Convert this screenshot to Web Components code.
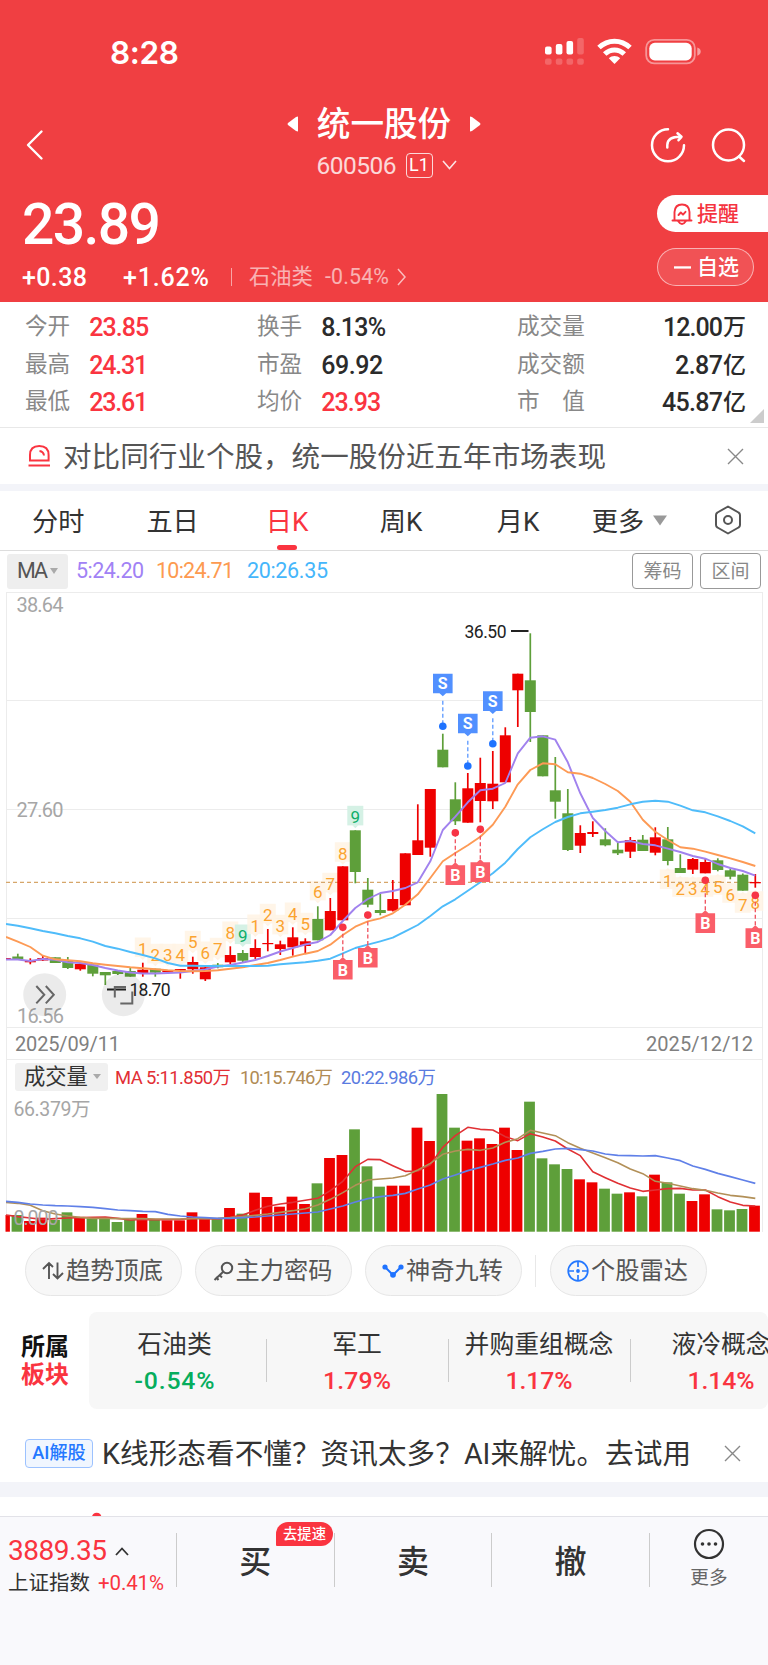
<!DOCTYPE html>
<html lang="zh-CN">
<head>
<meta charset="utf-8">
<title>统一股份 600506</title>
<style>
    body {
        margin: 0;
        width: 768px;
        background: #fff;
        font-family: Roboto, "Noto Sans CJK SC", sans-serif;
        line-height: 1;
        color: #333;
    }
</style>
</head>
<body>
<stock-app></stock-app>

<script>
// Text that is spaced out to fill exactly `w` pixels
class FitText extends HTMLElement {

    constructor() {
        super();
        this.attachShadow({ mode: "open" });
        this.shadowRoot.innerHTML = `
            <style>
                :host { display: inline-block; white-space: pre; flex: none; }
            </style>
            <slot></slot>
        `.replace(/\n\s*/g, "");
    }

    connectedCallback() {
        const width = Number(this.getAttribute("w"));
        const natural = this.getBoundingClientRect().width;
        const gaps = this.textContent.length - 1;

        if (gaps > 0) {
            this.style.letterSpacing = `${(width - natural) / gaps}px`;
        }
        this.style.width = `${width}px`;
    }
}

class StatusBar extends HTMLElement {

    constructor() {
        super();
        this.attachShadow({ mode: "open" });
        this.shadowRoot.innerHTML = `
            <style>
                :host {
                    display: flex;
                    justify-content: space-between;
                    align-items: center;
                    height: 105px;
                    padding: 0 67px 0 110px;
                    box-sizing: border-box;
                }
                .time { font: 600 31.5px/1 Inter, sans-serif; }
                svg { display: block; margin-top: -2px; }
            </style>
            <fit-text class="time" w="69">8:28</fit-text>
            <svg width="158" height="30" viewBox="543 37 158 30" fill="#fff">
                <rect x="545" y="46.5" width="6.6" height="8" rx="2"/>
                <rect x="555.8" y="44" width="6.6" height="10.5" rx="2"/>
                <rect x="566.5" y="41" width="6.6" height="13.5" rx="2"/>
                <g opacity=".2">
                    <rect x="577.2" y="38" width="6.6" height="16.5" rx="2"/>
                    <rect x="545" y="58.5" width="6.6" height="6.3" rx="2"/>
                    <rect x="555.8" y="58.5" width="6.6" height="6.3" rx="2"/>
                    <rect x="566.5" y="58.5" width="6.6" height="6.3" rx="2"/>
                    <rect x="577.2" y="58.5" width="6.6" height="6.3" rx="2"/>
                </g>
                <g fill="none" stroke="#fff" stroke-width="5">
                    <path d="M599 47.5 C608 39 621 39 630 47.5"/>
                    <path d="M604.7 54 C610.5 48.5 618.5 48.5 624.3 54"/>
                </g>
                <path d="M614.5 64 L608.8 58.2 C612 55.2 617 55.2 620.2 58.2 Z"/>
                <rect x="646.2" y="39.8" width="48.6" height="23.6" rx="8" fill="none" stroke="#fff" stroke-opacity=".45" stroke-width="1.8"/>
                <rect x="649.3" y="42.8" width="42.4" height="17.6" rx="5.5"/>
                <path d="M697.3 47.5 Q700.7 48.5 700.7 51.6 Q700.7 54.7 697.3 55.7 Z" opacity=".5"/>
            </svg>
        `;
    }
}

class StockHeader extends HTMLElement {

    constructor() {
        super();
        this.attachShadow({ mode: "open" });
        this.shadowRoot.innerHTML = `
            <style>
                :host {
                    display: block;
                    height: 302px;
                    background: #f03f42;
                    color: #fff;
                }
                svg { display: block; flex: none; }
                nav {
                    display: grid;
                    grid-template-columns: 200px 1fr 200px;
                    height: 78px;
                }
                .back { padding: 24px 0 0 26px; }
                .name, .code {
                    display: flex;
                    justify-content: center;
                    align-items: center;
                }
                .name { height: 37px; gap: 18px; font-size: 33.6px; font-weight: 500; }
                .name span { padding-top: 2px; }
                .code { height: 46px; gap: 9px; font-size: 24.5px; padding: 0 0 0 5px; }
                .code fit-text { opacity: .8; padding-top: 2px; }
                .level {
                    border: 1px solid #ffffffcc;
                    border-radius: 4px;
                    width: 25px;
                    height: 23px;
                    display: grid;
                    place-items: center;
                    font-size: 18px;
                }
                .tools { display: flex; justify-content: flex-end; gap: 25px; padding: 22px 21px 0 0; }
                .quote { display: flex; justify-content: space-between; }
                .price { display: flex; font-size: 57px; font-weight: 500; margin: 13px 0 0 22px; }
                .change {
                    display: flex;
                    align-items: center;
                    height: 26px;
                    margin: 11px 0 0 22px;
                    font-size: 25px;
                    font-weight: 500;
                }
                .change i { width: 1px; height: 18px; background: #fff8; margin: 0 17px 0 22px; }
                .change .dim { opacity: .6; font-weight: 400; font-size: 21.3px; margin-right: 12px; }
                .side { display: flex; flex-direction: column; align-items: flex-end; padding-top: 12px; gap: 16px; }
                .alert, .watch {
                    display: flex;
                    align-items: center;
                    box-sizing: border-box;
                    height: 37px;
                    font-size: 21px;
                    font-weight: 500;
                }
                .alert {
                    width: 111px;
                    padding-left: 14px;
                    gap: 4px;
                    border-radius: 19px 0 0 19px;
                    background: #fff;
                    color: #f5333f;
                }
                .alert span { padding-top: 1px; }
                .watch {
                    width: 97px;
                    height: 38px;
                    padding-left: 16px;
                    gap: 6px;
                    margin-right: 14px;
                    border: 1px solid #ffffff90;
                    border-radius: 19px;
                    background: #ffffff1a;
                }
            </style>
            <status-bar></status-bar>
            <nav>
                <div class="back">
                    <svg width="18" height="32" fill="none" stroke="#fff" stroke-width="2.4" stroke-linecap="round" stroke-linejoin="round">
                        <path d="M15.5 2.5 L2 16 L15.5 29.5"/>
                    </svg>
                </div>
                <div>
                    <div class="name">
                        <svg width="12" height="16"><path d="M11 .5 V15.5 L9 15 L1 9 Q0 8 1 7 L9 1 Z" fill="#fff"/></svg>
                        <span>统一股份</span>
                        <svg width="12" height="16"><path d="M1 .5 V15.5 L3 15 L11 9 Q12 8 11 7 L3 1 Z" fill="#fff"/></svg>
                    </div>
                    <div class="code">
                        <fit-text w="80">600506</fit-text>
                        <span class="level">L1</span>
                        <svg width="15" height="10" fill="none" stroke="#fff" stroke-width="1.6" opacity=".85"><path d="M1 1 L7.5 8.5 L14 1"/></svg>
                    </div>
                </div>
                <div class="tools">
                    <svg width="36" height="38" viewBox="650 127 36 38" fill="none" stroke="#fff" stroke-width="2.5" stroke-linecap="round" stroke-linejoin="round">
                        <path d="M668 129.3 A16 16 0 1 0 684 145.3"/>
                        <path d="M667.3 147.5 V145 Q667.5 136.8 680 136.8"/>
                        <path d="M677.5 133.3 L681.5 136.8 L678.5 140.2"/>
                    </svg>
                    <svg width="36" height="38" viewBox="711 127 36 38" fill="none" stroke="#fff" stroke-width="2.5" stroke-linecap="round">
                        <circle cx="728.5" cy="145" r="15.5"/><path d="M739 156.5 L744 161"/>
                    </svg>
                </div>
            </nav>
            <div class="quote">
                <div>
                    <div class="price"><fit-text w="139">23.89</fit-text></div>
                    <div class="change">
                        <fit-text w="65">+0.38</fit-text>
                        <fit-text w="86" style="margin-left:36px">+1.62%</fit-text>
                        <i></i>
                        <span class="dim">石油类</span>
                        <fit-text class="dim" w="64" style="margin-right:8px">-0.54%</fit-text>
                        <svg width="10" height="18" fill="none" stroke="#fff" stroke-width="1.5" opacity=".65"><path d="M1 1 L8 9 L1 17"/></svg>
                    </div>
                </div>
                <div class="side">
                    <div class="alert">
                        <svg width="22" height="24" fill="none" stroke="#f5333f" stroke-width="1.9" stroke-linejoin="round" stroke-linecap="round">
                            <path d="M3.5 18 V10 Q4 2.5 11 2.5 Q18 2.5 18.5 10 V18 M1.5 18.5 H20.5 M7 19 Q11 25 15 19"/>
                            <path d="M7.5 13 L9.8 10.5 L12 12.7 L14.5 9.8"/>
                        </svg>
                        <span>提醒</span>
                    </div>
                    <div class="watch">
                        <svg width="17" height="3"><rect y=".3" width="17" height="2.3" fill="#fff"/></svg>
                        <span>自选</span>
                    </div>
                </div>
            </div>
        `;
    }
}

class StockStats extends HTMLElement {

    constructor() {
        super();
        this.attachShadow({ mode: "open" });

        const cells = [
            ["今开", "23.85", 60, "up"], ["换手", "8.13%", 65, ""], ["成交量", "12.00", 60, "", "万"],
            ["最高", "24.31", 59, "up"], ["市盈", "69.92", 62, ""], ["成交额", "2.87", 48, "", "亿"],
            ["最低", "23.61", 59, "up"], ["均价", "23.93", 60, "up"], ["市　值", "45.87", 61, "", "亿"]
        ];

        this.shadowRoot.innerHTML = `
            <style>
                :host {
                    display: grid;
                    grid-template-columns: 232px 260px 229px;
                    grid-auto-rows: 37.5px;
                    align-items: center;
                    height: 126px;
                    padding: 7px 22px 0 25px;
                    box-sizing: border-box;
                    border-bottom: 1px solid #e8e8e8;
                    position: relative;
                }
                div { display: flex; align-items: center; font-size: 22.6px; color: #888; }
                b { display: flex; align-items: center; margin-left: 19px; font-weight: 500; font-size: 25px; color: #2b2b2b; }
                b span { font-size: 23px; }
                .up { color: #fa3440; }
                div:nth-of-type(3n) b { margin-left: auto; }
                svg { position: absolute; right: 4px; bottom: 4px; }
            </style>
            ${cells.map(([label, value, width, cls, unit]) => `
                <div>${label}<b class="${cls}"><fit-text w="${width}">${value}</fit-text>${unit ? `<span>${unit}</span>` : ""}</b></div>
            `).join("")}
            <svg width="14" height="14"><path d="M14 0 V14 H0 Z" fill="#ccc"/></svg>
        `;
    }
}

class NoticeRow extends HTMLElement {

    constructor() {
        super();
        this.attachShadow({ mode: "open" });
        this.shadowRoot.innerHTML = `
            <style>
                :host {
                    display: flex;
                    align-items: center;
                    box-sizing: border-box;
                    height: 56px;
                    padding: 0 24px 0 27px;
                    font-size: 28.6px;
                    color: #555;
                }
                .text { padding-top: 3px; }
                .close { margin-left: auto; }
            </style>
            <slot name="icon"></slot>
            <div class="text"><slot></slot></div>
            <svg class="close" width="17" height="17" fill="none" stroke="#888" stroke-width="1.4"><path d="M1 1 L16 16 M16 1 L1 16"/></svg>
        `;
    }
}

class PeriodTabs extends HTMLElement {

    constructor() {
        super();
        this.attachShadow({ mode: "open" });
        this.shadowRoot.innerHTML = `
            <style>
                :host {
                    display: flex;
                    align-items: center;
                    box-sizing: border-box;
                    height: 60px;
                    padding-left: 32px;
                    border-bottom: 1px solid #ddd;
                    font-size: 26.2px;
                    white-space: nowrap;
                }
                span { flex: none; box-sizing: border-box; height: 59px; line-height: 62px; }
                .active { color: #fa3440; position: relative; }
                .active i {
                    position: absolute;
                    left: 11px;
                    bottom: 0;
                    width: 20px;
                    height: 5px;
                    border-radius: 2.5px;
                    background: #fa3440;
                }
                svg { flex: none; }
            </style>
            <span style="margin-right:62px">分时</span>
            <span style="margin-right:67px">五日</span>
            <span class="active" style="width:42px;margin-right:72px">日K<i></i></span>
            <span style="width:44px;margin-right:73px">周K</span>
            <span style="width:44px;margin-right:51px">月K</span>
            <span style="margin-right:9px">更多</span>
            <svg width="14" height="11"><path d="M0 .5 H14 L7 10.5 Z" fill="#999"/></svg>
            <svg style="margin-left:47px;margin-top:-1px" width="28" height="30" fill="none" stroke="#555" stroke-width="2" stroke-linejoin="round">
                <path d="M14 1.5 L24.5 7.5 Q26 8.3 26 10 V20 Q26 21.7 24.5 22.5 L14 28.5 L3.5 22.5 Q2 21.7 2 20 V10 Q2 8.3 3.5 7.5 Z"/>
                <circle cx="14" cy="15" r="4"/>
            </svg>
        `;
    }
}

const RED = "#ee0000";
const GREEN = "#5e9f3a";
const xAt = i => 5.3 + i * 12.5;
const line = (ys, color, width = 1.9) =>
    `<polyline points="${ys.map((y, i) => `${Math.max(6, xAt(i))},${y}`).join(" ")}" fill="none" stroke="${color}" stroke-width="${width}" stroke-linejoin="round"/>`;

// [up/down, high, body top, body bottom, low] in chart units
const CANDLES = [
    ["r",958,958,960,960],["g",953.7,956.5,959,960],["r",958.3,960.7,962.3,964.3],["r",955.5,958,960.5,961],
    ["g",957.3,957.3,963,963],["g",957,960.5,968,969],["r",962.5,964,969.3,970.7],["g",964.7,964.7,973.7,976.3],
    ["g",972,972,975.3,985],["g",970,971,974,975],["g",967.7,971,976.7,976.7],["r",962.7,969.7,973,976.7],
    ["g",968.7,968.7,972.7,976.7],["r",970.3,970.3,972,972],["r",969,969,970.7,978.7],["r",956.7,962,969.3,973.7],
    ["r",966.7,967.3,979.3,981],["g",963,964.7,967.3,968.3],["r",946.3,955,962.3,964.3],["g",950,953,960.7,962.3],
    ["r",939.3,948,957,959],["r",929,943,944.2,951.3],["r",940.7,944.3,949,955],["r",927.3,937.3,947.3,955.7],
    ["r",938.3,941.3,946,953],["g",906.3,919,940.3,940.3],["r",898,911,930.3,930.3],["r",866.3,866.3,920.3,920.3],
    ["g",830.3,830.3,872,883.3],["g",878,889.7,904.7,907.3],["g",894,910,913,915.3],["r",880,899,910.7,911.5],
    ["r",853.3,853.3,905.3,905.3],["r",804.3,840.3,855,855],["r",789,789,847.7,856.7],["g",733.7,749.7,767.3,767.3],
    ["g",782.3,799.3,821.3,825],["r",773,788.3,822.7,822.7],["r",757.7,783,801,822.3],["r",751,783.7,801.3,809],
    ["r",727.3,735.3,782.3,782.3],["r",673.7,673.7,690.3,727],["g",633.3,680.3,712,742],["g",735.3,735.3,776.3,776.3],
    ["g",757,790.3,801.7,818.7],["g",789,813.3,850,851],["r",825.3,833,845.7,853],["r",821.3,832,834,837],
    ["g",828.3,839.3,845.3,846.3],["g",842.3,849.7,853.3,855],["r",837,840,851.7,858],["g",835,839.7,851,851],
    ["r",827.3,837.3,852.7,855.3],["g",827,839.3,861,865.3],["g",854.3,868,873,873],["r",858,859,869.7,874],
    ["r",858.7,862,873.3,873.3],["g",858.3,860.3,870,871.3],["g",868.7,870.3,876.7,879.3],["g",873.5,874.7,890.7,890.7],
    ["r",874,882,883.3,887.7]
];

const MA5 = [959.5,959.5,961,959,959.7,962.3,963,965,968,970.5,972.5,973.5,973.5,973,972.5,971,969.5,966.5,965,962.5,
    960,956,951.5,948,944.5,942,935,921,908,899,893,891,888,882.3,861.3,830,816.7,802.3,790.3,788.7,
    783,753.3,737.7,736.3,739.7,762.3,793.3,818,831,842.3,841,844,845.3,848.7,852,856,858.7,864,868,871,875.7];
const MA10 = [937,941.7,947,955.7,959.3,960.3,961.3,963.3,964.7,966,967.3,968.3,969.3,970.3,971,971.3,971,970.3,968.7,967.3,
    965,963,960,956.7,953.7,951,944.7,935,926.7,921.3,918.3,913.3,904.7,894.3,878,861.3,853,845.3,836.7,824.7,
    806.7,784.3,770,763.3,764.3,772.3,773.7,778,784,791,801.7,819.7,831.7,840,847.3,848.7,851.7,855,858.3,862,866];
const MA20 = [924,925.7,928.3,931,933.3,936,938.3,941.7,946,948.7,952,955,958.3,963,965.7,965.7,966,966,966,966,
    966,965.7,964.3,963.3,962.3,960.7,958.7,953.3,948,944.7,941.3,937.7,931.3,925,916,906.3,899.3,890.7,882.3,873.3,
    862.7,849,837.3,829.3,822,817,813.3,811.7,810,807.7,804.3,801.7,800.7,801.7,805.7,810.3,812.3,816.3,821,826.3,833.3];

// [candle index, digit, baseline]
const COUNTS_UP = [[11,1,955],[12,2,961.3],[13,3,961.3],[14,4,961.3],[15,5,948.3],[16,6,959],[17,7,955.3],[18,8,939],[19,9,942],
    [20,1,932],[21,2,921.3],[22,3,932.3],[23,4,920],[24,5,930.3],[25,6,898.3],[26,7,890.3],[27,8,859.7],[28,9,823.3]];
const COUNTS_DOWN = [[53,1,887],[54,2,894.7],[55,3,895],[56,4,894.7],[57,5,892.7],[58,6,900.7],[59,7,910.7],[60,8,908.7]];

class KlineChart extends HTMLElement {

    constructor() {
        super();
        this.attachShadow({ mode: "open" });
        this.shadowRoot.innerHTML = `
            <style>
                :host { display: block; height: 468px; }
                svg { display: block; }
                text { font-family: Roboto, sans-serif; }
                .axis { font-size: 20px; fill: #a6a6a6; }
                .date { font-size: 20px; fill: #808080; }
                .mark { font-size: 17.5px; fill: #222; }
                .count { font-size: 17px; text-anchor: middle; }
                .flag { font-size: 16px; font-weight: 700; text-anchor: middle; fill: #fff; }
            </style>
            <svg width="768" height="468" viewBox="0 591 768 468">
                <path d="M6 592.5 H762 M6 700.5 H762 M6 809.5 H762 M6 918.5 H762 M6 1027.5 H762 M6.5 592 V1059 M762.5 592 V1059" stroke="#ececec" fill="none"/>
                <text class="axis" x="16.5" y="612" textLength="47">38.64</text>
                <text class="axis" x="16.5" y="817.3" textLength="47">27.60</text>
                ${this.counts()}
                <path d="M6 882.4 H762" stroke="#d6a66a" stroke-width="1.4" stroke-dasharray="4 3"/>
                <clipPath id="plot"><rect x="6" y="592" width="756" height="440"/></clipPath>
                <g clip-path="url(#plot)">
                    ${CANDLES.map((c, i) => this.candle(c, i)).join("")}
                    ${line(MA5, "#a182ee")}
                    ${line(MA10, "#fd9a55")}
                    ${line(MA20, "#4fbcfa")}
                    ${this.flags()}
                </g>
                <text class="mark" x="464.5" y="637.5" textLength="42">36.50</text>
                <path d="M511 631 H528.5 M107 989.5 H126" stroke="#222" stroke-width="1.8"/>
                <text class="mark" x="129.5" y="995.5" textLength="41">18.70</text>
                <text class="axis" x="17" y="1022.5" textLength="47">16.56</text>
                <circle cx="44.7" cy="994.7" r="21.5" fill="#000" opacity=".08"/>
                <circle cx="123.3" cy="994.7" r="21.5" fill="#000" opacity=".08"/>
                <path d="M36.3 986 L44.3 994.7 L36.3 1003.4 M45.8 986 L53.8 994.7 L45.8 1003.4 M114.8 997.5 V987 H126 M120.3 1003.4 H132.3 V991.5" fill="none" stroke="#666" stroke-width="2"/>
                <text class="date" x="15" y="1051" textLength="105">2025/09/11</text>
                <text class="date" x="646" y="1051" textLength="107">2025/12/12</text>
            </svg>
        `;
    }

    candle([dir, high, top, bottom, low], i) {
        const color = dir === "r" ? RED : GREEN;
        const x = xAt(i);
        return `<rect x="${x - 0.85}" y="${high}" width="1.7" height="${low - high}" fill="${color}"/>
            <rect x="${x - 5.5}" y="${top}" width="11" height="${bottom - top}" fill="${color}"/>`;
    }

    counts() {
        const digit = ([i, n, y], below) => {
            const x = xAt(i);
            const tip = below
                ? `M${x - 3} ${y - 16} l3 -3 l3 3 Z`
                : `M${x - 3} ${y + 2} l3 3 l3 -3 Z`;
            const fill = n === 9 ? "#d5f1e5" : "#fff3e4";
            return `<rect x="${x - 8}" y="${y - 17.5}" width="16" height="19.6" fill="${fill}" opacity="${n === 9 ? 1 : .85}"/>
                <path d="${tip}" fill="${fill}"/>
                <text class="count" x="${x}" y="${y}" fill="${n === 9 ? "#0fae69" : "#fba32f"}">${n}</text>`;
        };
        return COUNTS_UP.map(c => digit(c, false)).join("") + COUNTS_DOWN.map(c => digit(c, true)).join("");
    }

    flags() {
        const sell = [[35, 673.7, 726.3], [37, 713.7, 766], [39, 691.3, 743.7]].map(([i, y, dot]) => {
            const x = xAt(i);
            return `<path d="M${x} ${y + 27} V${dot}" stroke="#5b98ff" stroke-width="1.3" stroke-dasharray="4 2.5"/>
                <circle cx="${x}" cy="${dot}" r="3.8" fill="#1f73ff"/>
                <path d="M${x - 9.8} ${y} h19.6 v19.6 h-6.5 l-3.3 3 l-3.3 -3 h-6.5 Z" fill="#5190ff"/>
                <text class="flag" x="${x}" y="${y + 15.6}">S</text>`;
        });
        const buy = [[27, 960, 927.3], [29, 948, 915], [36, 865.3, 832.7], [38, 862.3, 829.3], [56, 913.3, 880.3], [60, 928.3, 895.3]].map(([i, y, dot]) => {
            const x = xAt(i);
            return `<path d="M${x} ${dot} V${y - 2}" stroke="#f0505d" stroke-width="1.3" stroke-dasharray="4 2.5"/>
                <circle cx="${x}" cy="${dot}" r="3.8" fill="#f73445"/>
                <path d="M${x - 9.8} ${y} h6.5 l3.3 -3 l3.3 3 h6.5 v19.6 h-19.6 Z" fill="#fa5e69"/>
                <text class="flag" x="${x}" y="${y + 15.6}">B</text>`;
        });
        return sell.join("") + buy.join("");
    }
}

// Bar tops and averages of the volume pane, base line at 575, three units to a pixel
const VOLUME = [525,525,543,533,540,517,533,535,536,546,539,522,538,541,541,517,536,537,504,521,
    458,471,500,470,492,430,354,345,268,379,440,437,437,263,303,162,263,302,295,312,
    263,330,185,355,373,387,418,427,446,461,457,469,404,427,461,483,463,508,511,507,497];
const VOLUME_DIR = "rgrrggrggggrgrrrrgrgrrrrrgrrgggrrrrggrrrrrggggrrggrgrggrrgggr";
const VMA5 = [525,530,534,538,536,534,533,532,531,535,540,538,539,539,538,534,536,537,532,525,
    511,499,492,487,481,475,452,424,380,358,359,377,394,393,374,322,287,262,268,270,
    290,302,281,291,303,327,347,395,413,430,444,454,450,446,445,450,450,470,486,496,498];
const VMA10 = [487,490,496,512,522,528,532,535,535,536,536,536,537,537,537,536,536,535,533,530,
    526,522,517,512,506,495,478,458,436,420,417,414,407,390,370,343,333,328,331,324,
    307,296,271,279,287,308,325,339,353,368,387,401,424,430,438,446,451,459,466,470,475];
const VMA20 = [484,487,492,495,497,498,500,502,506,510,512,514,515,523,528,531,533,535,535,533,
    531,528,525,522,519,516,507,498,486,476,470,466,460,447,435,417,405,392,382,372,
    361,354,340,334,327,325,329,333,342,346,347,348,347,354,362,378,388,400,410,420,430];

class VolumeChart extends HTMLElement {

    constructor() {
        super();
        this.attachShadow({ mode: "open" });
        const toY = v => 1040 + v / 3;

        this.shadowRoot.innerHTML = `
            <style>
                :host { display: block; height: 186px; }
                header {
                    display: flex;
                    align-items: center;
                    box-sizing: border-box;
                    height: 33px;
                    margin: 0 5px 0 6px;
                    padding: 1px 0 0 8px;
                    border: solid #ececec;
                    border-width: 1px 1px 0;
                    font-size: 18.4px;
                }
                fit-text { padding-top: 4px; }
                .pick {
                    display: flex;
                    align-items: center;
                    gap: 5px;
                    box-sizing: border-box;
                    width: 93px;
                    height: 28px;
                    padding-left: 9px;
                    margin-right: 7px;
                    border-radius: 3px;
                    background: #f0f0f0;
                    font-size: 21.3px;
                }
                svg { display: block; }
                text { font-family: Roboto, "Noto Sans CJK SC", sans-serif; font-size: 19.5px; fill: #a6a6a6; }
            </style>
            <header>
                <span class="pick">成交量<svg width="8" height="5"><path d="M0 0 H8 L4 5 Z" fill="#aaa"/></svg></span>
                <fit-text w="116" style="color:#e22f35;margin-right:9px">MA 5:11.850万</fit-text>
                <fit-text w="93" style="color:#b08b55;margin-right:8px">10:15.746万</fit-text>
                <fit-text w="95" style="color:#5a7be0">20:22.986万</fit-text>
            </header>
            <svg width="768" height="153" viewBox="0 1092 768 153">
                <path d="M6.5 1092 V1232 M762.5 1092 V1232" stroke="#ececec"/>
                <text x="13.5" y="1115.5" textLength="77">66.379万</text>
                <clipPath id="plot"><rect x="5.5" y="1092" width="757" height="142"/></clipPath>
                <g clip-path="url(#plot)">
                    ${VOLUME.map((v, i) => `<rect x="${xAt(i) - 6.2}" y="${toY(v)}" width="10.8" height="${1231.7 - toY(v)}" fill="${VOLUME_DIR[i] === "r" ? RED : GREEN}"/>`).join("")}
                    ${line(VMA5.map(toY), "#e03034", 1.6)}
                    ${line(VMA10.map(toY), "#b29058", 1.6)}
                    ${line(VMA20.map(toY), "#6080e8", 1.7)}
                </g>
                <text x="13.5" y="1225.3" textLength="45">0.000</text>
            </svg>
        `;
    }
}

class IndicatorBar extends HTMLElement {

    constructor() {
        super();
        this.attachShadow({ mode: "open" });
        this.shadowRoot.innerHTML = `
            <style>
                :host {
                    display: flex;
                    align-items: center;
                    box-sizing: border-box;
                    height: 40px;
                    padding: 0 7px;
                    font-size: 21.5px;
                }
                .pick {
                    display: flex;
                    align-items: center;
                    justify-content: center;
                    gap: 2px;
                    width: 61px;
                    height: 35px;
                    margin-right: 8px;
                    border-radius: 3px;
                    background: #eee;
                    color: #555;
                }
                .button {
                    display: grid;
                    place-items: center;
                    box-sizing: border-box;
                    width: 61px;
                    height: 36px;
                    margin-left: 7px;
                    border: 1px solid #999;
                    border-radius: 4px;
                    font-size: 19px;
                    color: #888;
                }
            </style>
            <span class="pick"><fit-text w="31">MA</fit-text><svg width="8" height="6"><path d="M0 0 H8 L4 6 Z" fill="#aaa"/></svg></span>
            <fit-text w="68" style="color:#a182f5;margin-right:12px">5:24.20</fit-text>
            <fit-text w="78" style="color:#fd9a50;margin-right:13px">10:24.71</fit-text>
            <fit-text w="81" style="color:#45b6fb;margin-right:auto">20:26.35</fit-text>
            <span class="button">筹码</span>
            <span class="button">区间</span>
        `;
    }
}

class ToolPills extends HTMLElement {

    constructor() {
        super();
        this.attachShadow({ mode: "open" });
        this.shadowRoot.innerHTML = `
            <style>
                :host { display: flex; align-items: center; gap: 13px; height: 51px; padding-left: 25px; }
                span {
                    display: flex;
                    align-items: center;
                    justify-content: center;
                    gap: 2px;
                    box-sizing: border-box;
                    width: 157px;
                    height: 51px;
                    padding: 1px 2px 0 0;
                    border: 1px solid #e6e6e6;
                    border-radius: 26px;
                    background: #f7f7f7;
                    font-size: 24.2px;
                    color: #555;
                }
                i { width: 1px; height: 32px; margin-right: 1px; background: #e8e8e8; }
                svg { flex: none; }
            </style>
            <span>
                <svg width="22" height="20" fill="none" stroke="#555" stroke-width="1.9"><path d="M7 18 V2.5 M1 8 L7 2 L11 6 M15.5 1.5 V17 M11 13 L15.5 17.5 L21 12"/></svg>
                趋势顶底
            </span>
            <span>
                <svg width="21" height="21" fill="none" stroke="#555" stroke-width="2"><circle cx="14" cy="7" r="5.2"/><path d="M10 11 L1.5 19 M3 16 L5.5 19 M6 13.5 L9 16.5"/></svg>
                主力密码
            </span>
            <span>
                <svg width="22" height="16" fill="#1f73ff"><path d="M3 4 L11 12 L19 4" fill="none" stroke="#1f73ff" stroke-width="2"/><circle cx="3" cy="4" r="2.6"/><circle cx="11" cy="11.8" r="2.9"/><circle cx="19" cy="4" r="2.6"/></svg>
                神奇九转
            </span>
            <i></i>
            <span>
                <svg width="22" height="22" fill="none" stroke="#2478ff" stroke-width="1.7"><circle cx="11" cy="11" r="9.8"/><path d="M11 1 V7 M11 15 V21 M1 11 H7 M15 11 H21"/><circle cx="11" cy="11" r="1.9" fill="#2478ff" stroke="none"/></svg>
                个股雷达
            </span>
        `;
    }
}

class SectorStrip extends HTMLElement {

    constructor() {
        super();
        this.attachShadow({ mode: "open" });
        const sectors = [["石油类", "-0.54%", 80], ["军工", "1.79%", 68], ["并购重组概念", "1.17%", 67], ["液冷概念", "1.14%", 67]];

        this.shadowRoot.innerHTML = `
            <style>
                :host { display: flex; height: 97px; margin-top: 16px; overflow: hidden; }
                h2 { flex: none; width: 68px; margin: 0 0 0 21px; padding-top: 21px; font-size: 24px; line-height: 28px; font-weight: 700; color: #111; }
                h2 em { display: block; font-style: normal; color: #fa3440; }
                .list { display: flex; flex: 1; min-width: 0; background: #f7f7f7; border-radius: 8px; overflow: hidden; }
                .item { flex: none; display: flex; flex-direction: column; align-items: center; width: 182px; box-sizing: border-box; padding-top: 21px; font-size: 24.8px; }
                .item:first-child { width: 177px; padding-right: 6px; }
                .list i { flex: none; width: 1px; margin: 27px -1px 27px 0; background: #ccc; }
                fit-text { margin-top: 11px; color: #fa3440; font-weight: 500; }
                .down { color: #06ad5d; }
            </style>
            <h2>所属<em>板块</em></h2>
            <div class="list">
                ${sectors.map(([name, pct, width]) => `
                    <div class="item">${name}<fit-text w="${width}" class="${pct[0] === "-" ? "down" : ""}">${pct}</fit-text></div>
                `).join("<i></i>")}
            </div>
        `;
    }
}

class TradeBar extends HTMLElement {

    constructor() {
        super();
        this.attachShadow({ mode: "open" });
        this.shadowRoot.innerHTML = `
            <style>
                :host {
                    display: flex;
                    box-sizing: border-box;
                    height: 149px;
                    padding-top: 16px;
                    border-top: 1.5px solid #e2e2e8;
                    background: #f9f9fc;
                }
                .index { width: 168px; height: 54px; padding: 4px 0 0 8px; color: #fa3440; font-size: 28px; }
                .index div { display: flex; align-items: center; gap: 8px; }
                .index .sub { margin-top: 8px; font-size: 20.5px; }
                .sub span { color: #333; }
                .action {
                    position: relative;
                    display: grid;
                    place-items: center;
                    box-sizing: border-box;
                    width: 157.6px;
                    height: 54px;
                    padding: 3px 0 0;
                    border-left: 1px solid #ccc;
                    font-size: 32px;
                    font-weight: 500;
                }
                .action b {
                    position: absolute;
                    left: 99px;
                    top: -11px;
                    width: 57px;
                    height: 24px;
                    border-radius: 12px 12px 12px 1px;
                    background: #fa3440;
                    color: #fff;
                    font-size: 14.3px;
                    font-weight: 500;
                    line-height: 24px;
                    text-align: center;
                }
                .more { flex: 1; height: 54px; border-left: 1px solid #ccc; display: flex; flex-direction: column; align-items: center; font-size: 18.6px; color: #666; gap: 9px; }
                .more svg { flex: none; margin-top: -5px; }
            </style>
            <div class="index">
                <div><fit-text w="99">3889.35</fit-text><svg width="14" height="9" fill="none" stroke="#333" stroke-width="1.8"><path d="M1 8 L7 1.5 L13 8"/></svg></div>
                <div class="sub"><span>上证指数</span><fit-text w="66">+0.41%</fit-text></div>
            </div>
            <div class="action">买<b>去提速</b></div>
            <div class="action">卖</div>
            <div class="action">撤</div>
            <div class="more">
                <svg width="32" height="32"><circle cx="16" cy="16" r="14" fill="none" stroke="#333" stroke-width="2.2"/><g fill="#333"><circle cx="9.5" cy="16" r="1.8"/><circle cx="16" cy="16" r="1.8"/><circle cx="22.5" cy="16" r="1.8"/></g></svg>
                更多
            </div>
        `;
    }
}

class StockApp extends HTMLElement {

    constructor() {
        super();
        this.attachShadow({ mode: "open" });
        this.shadowRoot.innerHTML = `
            <style>
                :host { display: block; width: 768px; height: 1665px; overflow: hidden; }
                .band { height: 7px; background: #f3f4f9; }
                .ai { height: 58px; margin-top: 15px; color: #333; padding: 0 27px 0 25px; }
                .tag {
                    display: grid;
                    place-items: center;
                    box-sizing: border-box;
                    width: 68px;
                    height: 29px;
                    margin-right: 9px;
                    border: 1px solid #9cc2ff;
                    border-radius: 4px;
                    background: #f0f6ff;
                    color: #2478ff;
                    font-size: 18.2px;
                    font-weight: 500;
                }
                .peek { height: 19.5px; overflow: hidden; }
                .peek svg { display: block; }
            </style>
            <stock-header></stock-header>
            <stock-stats></stock-stats>
            <notice-row>
                <svg slot="icon" style="margin-right:12px" width="24" height="24" fill="none" stroke="#fa3440" stroke-width="2"><path d="M3 16.5 V11 Q3 2 12.3 2 Q21.6 2 21.6 11 V16.5 Z M1.5 21.5 H23 M12.5 7 Q16.5 7.5 17 11.5"/></svg>
                <fit-text w="543">对比同行业个股，统一股份近五年市场表现</fit-text>
            </notice-row>
            <div class="band"></div>
            <period-tabs></period-tabs>
            <indicator-bar></indicator-bar>
            <kline-chart></kline-chart>
            <volume-chart></volume-chart>
            <tool-pills></tool-pills>
            <sector-strip></sector-strip>
            <notice-row class="ai">
                <span slot="icon" class="tag">AI解股</span>
                <fit-text w="589">K线形态看不懂？资讯太多？AI来解忧。去试用</fit-text>
            </notice-row>
            <div class="band" style="height:14.5px"></div>
            <div class="peek"><svg width="768" height="20"><circle cx="96.7" cy="20.5" r="4.8" fill="#fa3440"/></svg></div>
            <trade-bar></trade-bar>
        `;
    }
}

customElements.define("fit-text", FitText);
customElements.define("status-bar", StatusBar);
customElements.define("stock-header", StockHeader);
customElements.define("stock-stats", StockStats);
customElements.define("notice-row", NoticeRow);
customElements.define("period-tabs", PeriodTabs);
customElements.define("indicator-bar", IndicatorBar);
customElements.define("kline-chart", KlineChart);
customElements.define("volume-chart", VolumeChart);
customElements.define("tool-pills", ToolPills);
customElements.define("sector-strip", SectorStrip);
customElements.define("trade-bar", TradeBar);
customElements.define("stock-app", StockApp);
</script>
</body>
</html>
